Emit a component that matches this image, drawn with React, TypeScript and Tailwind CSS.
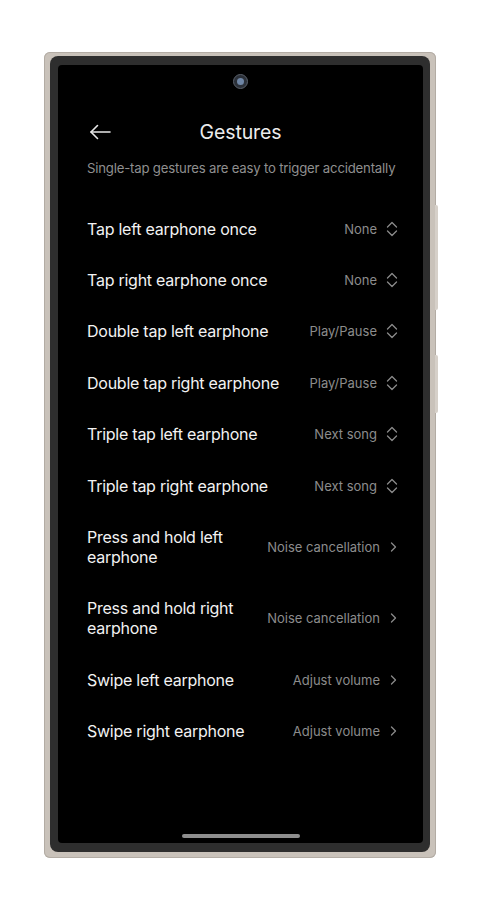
import React from 'react';

// One row of the gesture list: label on the left, current action on the right
interface GestureRow {
  label: string[];
  value: string;
  kind: 'select' | 'link';
}

const rows: GestureRow[] = [
  { label: ['Tap left earphone once'], value: 'None', kind: 'select' },
  { label: ['Tap right earphone once'], value: 'None', kind: 'select' },
  { label: ['Double tap left earphone'], value: 'Play/Pause', kind: 'select' },
  { label: ['Double tap right earphone'], value: 'Play/Pause', kind: 'select' },
  { label: ['Triple tap left earphone'], value: 'Next song', kind: 'select' },
  { label: ['Triple tap right earphone'], value: 'Next song', kind: 'select' },
  { label: ['Press and hold left', 'earphone'], value: 'Noise cancellation', kind: 'link' },
  { label: ['Press and hold right', 'earphone'], value: 'Noise cancellation', kind: 'link' },
  { label: ['Swipe left earphone'], value: 'Adjust volume', kind: 'link' },
  { label: ['Swipe right earphone'], value: 'Adjust volume', kind: 'link' },
];

const UpDownIcon = () => (
  <svg width="12" height="16" viewBox="0 0 12 16" fill="none" stroke="#8a8a8a" strokeWidth="1.3" strokeLinecap="round" strokeLinejoin="round">
    <path d="M1.5 6 L6 1.5 L10.5 6" />
    <path d="M1.5 10 L6 14.5 L10.5 10" />
  </svg>
);

const RightIcon = () => (
  <svg width="7" height="10" viewBox="0 0 7 10" fill="none" stroke="#8a8a8a" strokeWidth="1.3" strokeLinecap="round" strokeLinejoin="round">
    <path d="M1.5 1 L5.5 5 L1.5 9" />
  </svg>
);

const BackArrow = () => (
  <svg width="22" height="16" viewBox="0 0 22 16" fill="none" stroke="#e8e8e8" strokeWidth="1.6" strokeLinecap="round" strokeLinejoin="round">
    <path d="M21 8 H2" />
    <path d="M8.5 1.5 L2 8 L8.5 14.5" />
  </svg>
);

const App: React.FC = () => {
  return (
    <div
      className="w-[480px] h-[910px] bg-white flex items-center justify-center"
      style={{ fontFamily: 'Inter, "Noto Sans", sans-serif' }}
    >
      {/* Phone frame */}
      <div className="relative w-[392px] h-[806px] bg-[#c9c2ba] rounded-[6px] p-[6px] pt-[4px] pb-[6px] shadow-[inset_0_0_0_1px_#b3aca4]">
        {/* side keys */}
        <div className="absolute right-[-2px] top-[153px] w-[3px] h-[105px] bg-[#d6d0c9] rounded-r-[2px]" />
        <div className="absolute right-[-2px] top-[303px] w-[3px] h-[58px] bg-[#d6d0c9] rounded-r-[2px]" />

        {/* Bezel */}
        <div className="w-full h-full bg-[#2e2e2e] rounded-[8px] pt-[9px] pl-[8px] pr-[7px] pb-[9px]">
          {/* Screen */}
          <div className="w-full h-full bg-black rounded-[4px] flex flex-col text-[#ececec]">
            {/* punch-hole camera */}
            <div className="flex justify-center pt-[9px]">
              <div className="w-[15px] h-[15px] rounded-full bg-[#2b3038] border border-[#5a606a] flex items-center justify-center">
                <div className="w-[7px] h-[7px] rounded-full bg-[#6f86a6]" />
              </div>
            </div>

            {/* header */}
            <div className="relative flex items-center justify-center h-[44px] mt-[22px]">
              <div className="absolute left-[31px] top-[13px]">
                <BackArrow />
              </div>
              <span className="text-[19.5px] font-normal tracking-[-0.1px]">Gestures</span>
            </div>

            <p className="mt-[3px] px-[29px] text-[13.2px] leading-[20px] text-[#8f8f8f] tracking-[-0.2px] whitespace-nowrap">
              Single-tap gestures are easy to trigger accidentally
            </p>

            {/* gesture list */}
            <div className="mt-[25px] flex flex-col pl-[29px] pr-[25px]">
              {rows.map((row) => (
                <div key={row.label.join(' ')} className="flex items-center justify-between py-[15.7px]">
                  <div className="text-[16px] leading-[20px] text-[#f2f2f2] tracking-[-0.25px]">
                    {row.label.map((line) => (
                      <div key={line}>{line}</div>
                    ))}
                  </div>
                  {row.kind === 'select' ? (
                    <div className="flex items-center gap-[9px] text-[13px] leading-[20px] text-[#8c8c8c]">
                      <span>{row.value}</span>
                      <UpDownIcon />
                    </div>
                  ) : (
                    <div className="flex items-center gap-[10px] mr-[1px] text-[13px] leading-[20px] text-[#8c8c8c]">
                      <span>{row.value}</span>
                      <RightIcon />
                    </div>
                  )}
                </div>
              ))}
            </div>

            {/* home indicator */}
            <div className="mt-auto flex justify-center pb-[5px]">
              <div className="w-[118px] h-[4px] rounded-full bg-[#8e8e8e]" />
            </div>
          </div>
        </div>
      </div>
    </div>
  );
};

export default App;
